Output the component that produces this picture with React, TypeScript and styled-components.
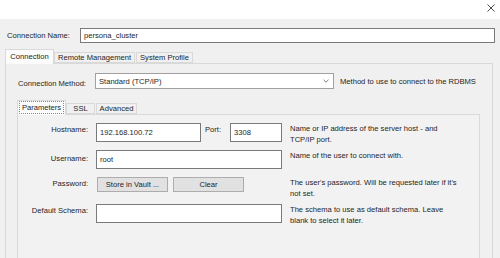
import styled, { createGlobalStyle } from 'styled-components';

const GlobalStyle = createGlobalStyle`
  html, body {
    margin: 0;
    padding: 0;
    overflow: hidden;
    background: #f0f0f0;
  }
  * {
    box-sizing: border-box;
  }
`;

const Window = styled.div`
  width: 500px;
  height: 258px;
  overflow: hidden;
  display: flex;
  flex-direction: column;
  background: #f0f0f0;
  font-family: 'Liberation Sans', Arial, sans-serif;
  font-size: 7.6px;
  color: #1e1e1e;
`;

const TitleBar = styled.div`
  height: 19px;
  background: #ffffff;
  display: flex;
  justify-content: flex-end;
  align-items: flex-start;
  padding: 4px 5px 0 0;
  flex-shrink: 0;
`;

const Body = styled.div`
  flex: 1;
  display: flex;
  flex-direction: column;
  padding: 9px 5px 0 5px;
`;

const NameRow = styled.div`
  display: flex;
  align-items: center;
  height: 15px;
  padding-left: 2px;
`;

const NameLabel = styled.span`
  width: 73px;
  flex-shrink: 0;
  line-height: 11px;
`;

const TextInput = styled.div<{ $w?: number; $h?: number }>`
  height: ${({ $h }) => $h ?? 19}px;
  width: ${({ $w }) => ($w ? `${$w}px` : 'auto')};
  flex: ${({ $w }) => ($w ? '0 0 auto' : '1')};
  background: #ffffff;
  border: 1px solid #7a7a7a;
  padding: 0 3px;
  display: flex;
  align-items: center;
  line-height: 11px;
  white-space: nowrap;
`;

const TabStrip = styled.div<{ $h: number }>`
  display: flex;
  align-items: flex-end;
  height: ${({ $h }) => $h}px;
  position: relative;
  z-index: 1;
`;

const Tab = styled.div<{ $active?: boolean; $w: number }>`
  width: ${({ $w }) => $w}px;
  height: ${({ $active }) => ($active ? 15 : 11)}px;
  margin-bottom: ${({ $active }) => ($active ? -1 : 0)}px;
  margin-right: ${({ $active }) => ($active ? 0 : 1)}px;
  border: 1px solid #d9d9d9;
  border-bottom: ${({ $active }) => ($active ? 'none' : '1px solid #d9d9d9')};
  background: ${({ $active }) => ($active ? '#fbfbfb' : '#f0f0f0')};
  display: flex;
  align-items: center;
  justify-content: center;
  padding-bottom: ${({ $active }) => ($active ? 2 : 0)}px;
  white-space: nowrap;
  line-height: 9px;
`;

const FocusText = styled.span`
  border: 1px dotted #8a8a8a;
  padding: 1px 2px;
  margin: 0 1px;
  flex: 1;
  text-align: center;
`;

const OuterTabs = styled.div`
  margin-top: 7px;
  margin-right: 2px;
  flex: 1;
  display: flex;
  flex-direction: column;
`;

const OuterPanel = styled.div`
  flex: 1;
  border: 1px solid #d9d9d9;
  background: #f0f0f0;
  padding: 9px 12px 0 12px;
  display: flex;
  flex-direction: column;
`;

const MethodRow = styled.div`
  display: grid;
  grid-template-columns: 77px 239px 1fr;
  align-items: center;
  height: 16px;
`;

const FieldLabel = styled.span<{ $right?: boolean; $top?: number }>`
  line-height: 11px;
  padding-top: ${({ $top }) => $top ?? 1}px;
  text-align: ${({ $right }) => ($right ? 'right' : 'left')};
  white-space: nowrap;
`;

const Select = styled.div`
  height: 16px;
  background: #ffffff;
  border: 1px solid #a0a0a0;
  display: flex;
  align-items: center;
  justify-content: space-between;
  padding: 0 4px 0 3px;
  line-height: 11px;
`;

const Note = styled.span`
  line-height: 11px;
  margin-left: 6px;
  white-space: nowrap;
`;

const InnerTabs = styled.div`
  margin-top: 10px;
  margin-left: -1px;
  flex: 1;
  display: flex;
  flex-direction: column;
`;

const InnerPanel = styled.div`
  flex: 1;
  min-height: 160px;
  border: 1px solid #d9d9d9;
  background: #f2f2f2;
  padding-top: 8px;
`;

const ParamGrid = styled.div`
  display: grid;
  grid-template-columns: 70px 186px 180px;
  grid-template-rows: repeat(4, 19px);
  column-gap: 8px;
  row-gap: 8px;
`;

const FieldCell = styled.div`
  display: flex;
  align-items: flex-start;
`;

const PortLabel = styled.span`
  line-height: 11px;
  padding-top: 1px;
  margin-left: 4px;
  margin-right: auto;
`;

const Description = styled.p`
  margin: 0;
  line-height: 11px;
  white-space: nowrap;
`;

const ButtonRow = styled.div`
  display: flex;
  gap: 5px;
  padding-left: 1px;
`;

const PushButton = styled.div`
  width: 71px;
  height: 15px;
  background: #e1e1e1;
  border: 1px solid #adadad;
  display: flex;
  align-items: center;
  justify-content: center;
  line-height: 11px;
`;

function CloseIcon() {
  return (
    <svg width="8" height="8" viewBox="0 0 8 8">
      <path d="M0.5 0.5 L7.5 7.5 M7.5 0.5 L0.5 7.5" stroke="#333" strokeWidth="0.9" fill="none" />
    </svg>
  );
}

function Chevron() {
  return (
    <svg width="6" height="4" viewBox="0 0 6 4">
      <path d="M0.5 0.8 L3 3.2 L5.5 0.8" stroke="#606060" strokeWidth="0.8" fill="none" />
    </svg>
  );
}

export default function App() {
  return (
    <Window>
      <GlobalStyle />
      <TitleBar>
        <CloseIcon />
      </TitleBar>
      <Body>
        <NameRow>
          <NameLabel>Connection Name:</NameLabel>
          <TextInput $h={15}>persona_cluster</TextInput>
        </NameRow>

        <OuterTabs>
          <TabStrip $h={13}>
            <Tab $active $w={49}>Connection</Tab>
            <Tab $w={81}>Remote Management</Tab>
            <Tab $w={57}>System Profile</Tab>
          </TabStrip>
          <OuterPanel>
            <MethodRow>
              <FieldLabel $top={4}>Connection Method:</FieldLabel>
              <Select>
                <span>Standard (TCP/IP)</span>
                <Chevron />
              </Select>
              <Note>Method to use to connect to the RDBMS</Note>
            </MethodRow>

            <InnerTabs>
              <TabStrip $h={15}>
                <Tab $active $w={49}>
                  <FocusText>Parameters</FocusText>
                </Tab>
                <Tab $w={29}>SSL</Tab>
                <Tab $w={41}>Advanced</Tab>
              </TabStrip>
              <InnerPanel>
                <ParamGrid>
                  <FieldLabel $right>Hostname:</FieldLabel>
                  <FieldCell>
                    <TextInput $w={105}>192.168.100.72</TextInput>
                    <PortLabel>Port:</PortLabel>
                    <TextInput $w={52}>3308</TextInput>
                  </FieldCell>
                  <Description>
                    Name or IP address of the server host - and
                    <br />
                    TCP/IP port.
                  </Description>

                  <FieldLabel $right $top={3}>Username:</FieldLabel>
                  <FieldCell>
                    <TextInput>root</TextInput>
                  </FieldCell>
                  <Description>Name of the user to connect with.</Description>

                  <FieldLabel $right>Password:</FieldLabel>
                  <ButtonRow>
                    <PushButton>Store in Vault ...</PushButton>
                    <PushButton>Clear</PushButton>
                  </ButtonRow>
                  <Description>
                    The user's password. Will be requested later if it's
                    <br />
                    not set.
                  </Description>

                  <FieldLabel $right>Default Schema:</FieldLabel>
                  <FieldCell>
                    <TextInput />
                  </FieldCell>
                  <Description>
                    The schema to use as default schema. Leave
                    <br />
                    blank to select it later.
                  </Description>
                </ParamGrid>
              </InnerPanel>
            </InnerTabs>
          </OuterPanel>
        </OuterTabs>
      </Body>
    </Window>
  );
}
